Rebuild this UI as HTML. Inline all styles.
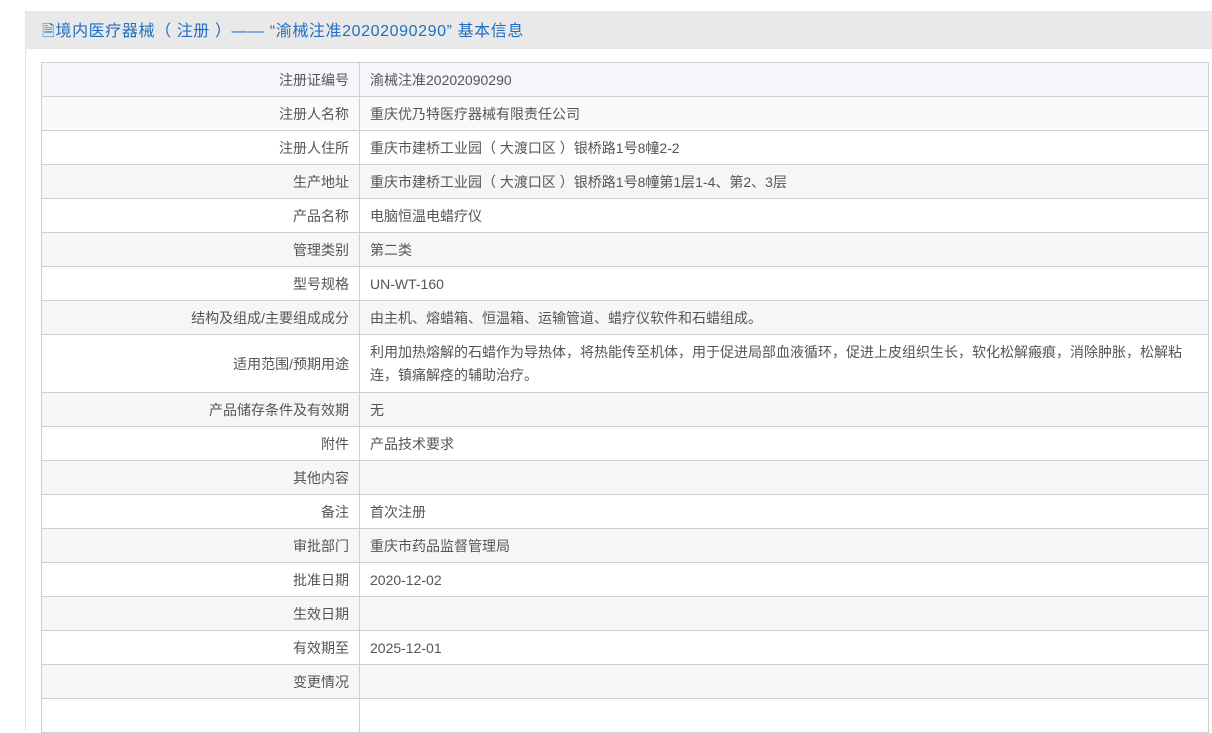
<!DOCTYPE html>
<html><head><meta charset="utf-8"><style>
body{margin:0;background:#fff;width:1212px;height:707px;overflow:hidden;font-family:"Liberation Sans","Noto Sans CJK SC",sans-serif;}
.wrap{position:absolute;left:25px;top:11px;width:1187px;height:720px;background:#fff;border-left:1px solid #e6e6e6;}
.hd{height:38px;background:#e9e9e9;color:#1e6fc0;font-size:16px;line-height:42px;padding-left:16px;letter-spacing:0.6px;}
table{position:absolute;left:15px;top:51px;width:1168px;border-collapse:collapse;font-size:14px;color:#555;}
td{border:1px solid #cfcfcf;height:32px;padding:1px 10px 0;line-height:23px;}
td.l{width:297px;text-align:right;}
tr.g td{background:#f6f6f6;}
tr.b td{background:#f5f6fa;}
</style></head><body>
<div class="wrap"><div class="hd">&#x1F5CE;境内医疗器械（ 注册 ）—— “渝械注准20202090290” 基本信息</div>
<table>
<tr class="b"><td class="l">注册证编号</td><td>渝械注准20202090290</td></tr>
<tr style="background:#fafafa"><td class="l">注册人名称</td><td>重庆优乃特医疗器械有限责任公司</td></tr>
<tr><td class="l">注册人住所</td><td>重庆市建桥工业园（ 大渡口区 ）银桥路1号8幢2-2</td></tr>
<tr class="g"><td class="l">生产地址</td><td>重庆市建桥工业园（ 大渡口区 ）银桥路1号8幢第1层1-4、第2、3层</td></tr>
<tr><td class="l">产品名称</td><td>电脑恒温电蜡疗仪</td></tr>
<tr class="g"><td class="l">管理类别</td><td>第二类</td></tr>
<tr><td class="l">型号规格</td><td>UN-WT-160</td></tr>
<tr class="g"><td class="l">结构及组成/主要组成成分</td><td>由主机、熔蜡箱、恒温箱、运输管道、蜡疗仪软件和石蜡组成。</td></tr>
<tr><td class="l" style="height:56px">适用范围/预期用途</td><td>利用加热熔解的石蜡作为导热体，将热能传至机体，用于促进局部血液循环，促进上皮组织生长，软化松解瘢痕，消除肿胀，松解粘<br>连，镇痛解痉的辅助治疗。</td></tr>
<tr class="g"><td class="l">产品储存条件及有效期</td><td>无</td></tr>
<tr><td class="l">附件</td><td>产品技术要求</td></tr>
<tr class="g"><td class="l">其他内容</td><td></td></tr>
<tr><td class="l">备注</td><td>首次注册</td></tr>
<tr class="g"><td class="l">审批部门</td><td>重庆市药品监督管理局</td></tr>
<tr><td class="l">批准日期</td><td>2020-12-02</td></tr>
<tr class="g"><td class="l">生效日期</td><td></td></tr>
<tr><td class="l">有效期至</td><td>2025-12-01</td></tr>
<tr class="g"><td class="l">变更情况</td><td></td></tr>
<tr><td class="l"></td><td></td></tr>
</table></div>
</body></html>
